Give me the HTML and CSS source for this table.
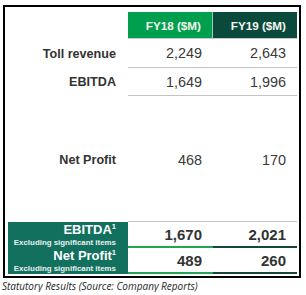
FILE: index.html
```html
<!DOCTYPE html>
<html>
<head>
<meta charset="utf-8">
<link rel="stylesheet" href="styles.css">
</head>
<body>
<div class="frame">
  <div class="grid">
    <div class="lab head-blank"></div>
    <div class="hd hd18">FY18 ($M)</div>
    <div class="hd hd19">FY19 ($M)</div>

    <div class="lab r1">Toll revenue</div>
    <div class="val r1">2,249</div>
    <div class="val r1">2,643</div>

    <div class="lab r2">EBITDA</div>
    <div class="val r2">1,649</div>
    <div class="val r2">1,996</div>

    <div class="lab r3">Net Profit</div>
    <div class="val r3">468</div>
    <div class="val r3">170</div>

    <div class="blab top"><span class="big">EBITDA<sup>1</sup></span><span class="small">Excluding significant items</span></div>
    <div class="bval g top">1,670</div>
    <div class="bval d top">2,021</div>

    <div class="blab"><span class="big">Net Profit<sup>1</sup></span><span class="small">Excluding significant items</span></div>
    <div class="bval g">489</div>
    <div class="bval d">260</div>
  </div>
</div>
<div class="caption">Statutory Results (Source: Company Reports)</div>
</body>
</html>
```
FILE: styles.css
```css
html, body {
  margin: 0;
  padding: 0;
  background: #ffffff;
}
body {
  font-family: "Liberation Sans", Arial, sans-serif;
}
.frame {
  margin: 5px 0 0 3px;
  width: 289px;
  height: 264px;
  border: 2px solid #000;
  padding: 5px 2px 0 3px;
  box-sizing: content-box;
}
.grid {
  display: grid;
  grid-template-columns: 120px 85px 84px;
  grid-template-rows: 27px 29px 28px 126px 26px 26px;
}
.hd {
  color: #f4f4ee;
  font-weight: bold;
  font-size: 11.7px;
  text-align: right;
  padding-right: 11px;
  display: flex;
  align-items: center;
  justify-content: flex-end;
  border-bottom: 1px solid #c9c9c9;
  padding-top: 1px;
}
.hd18 {
  background: #009f4e;
  border-right: 1px solid #a9c9b6;
}
.hd19 {
  background: #0a4a3d;
}
.lab {
  color: #333333;
  font-weight: bold;
  font-size: 12.6px;
  display: flex;
  align-items: center;
  justify-content: flex-end;
  padding-right: 12px;
}
.val {
  color: #3a3a3a;
  font-size: 14.4px;
  display: flex;
  align-items: center;
  justify-content: flex-end;
  padding-right: 11px;
  border-bottom: 1px solid #c4c4c4;
}
.r3 {
  padding-top: 2px;
}
.blab {
  background: #12705f;
  color: #ffffff;
  font-weight: bold;
  display: flex;
  flex-direction: column;
  align-items: flex-end;
  justify-content: center;
  padding-right: 12px;
}
.blab .big {
  font-size: 13px;
  line-height: 14px;
}
.blab sup {
  font-size: 7.5px;
  vertical-align: 5px;
  line-height: 0;
}
.blab .small {
  font-size: 7.9px;
  line-height: 11px;
  color: #e9f1ee;
}
.bval {
  color: #333333;
  font-weight: bold;
  font-size: 15px;
  display: flex;
  align-items: center;
  justify-content: flex-end;
  padding-right: 11px;
  padding-top: 1px;
}
.bval.g {
  border-bottom: 2px solid #1ea653;
}
.bval.d {
  border-bottom: 2px solid #17463c;
}
.caption {
  font-family: "Open Sans", sans-serif;
  font-style: italic;
  font-size: 10px;
  color: #1e1e1e;
  margin: 2px 0 0 2px;
  line-height: 12px;
}
```
